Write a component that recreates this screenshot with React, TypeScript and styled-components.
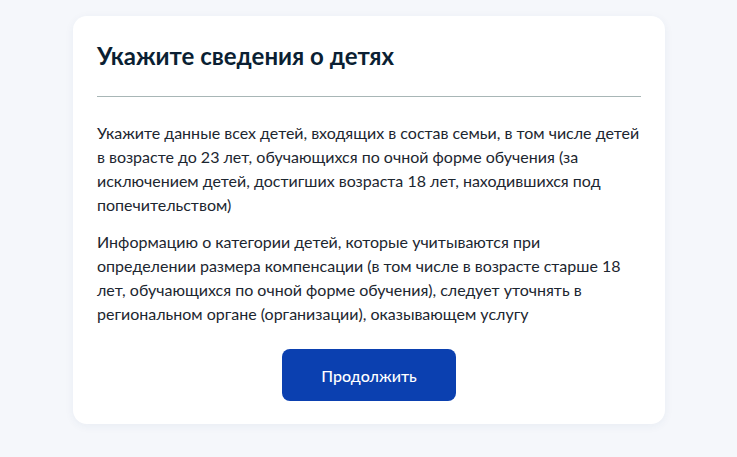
import styled, { createGlobalStyle } from "styled-components";

const Global = createGlobalStyle`
  html, body {
    margin: 0;
    padding: 0;
    background: #f5f7fb;
  }
  body {
    font-family: Lato, "Open Sans", sans-serif;
    -webkit-font-smoothing: antialiased;
  }
`

const Page = styled.div`
  min-height: 457px;
  padding: 16px 0 0 73px;
  box-sizing: border-box;
`

const Card = styled.section`
  width: 592px;
  box-sizing: border-box;
  padding: 24px 24px 23px;
  background: #fff;
  border-radius: 14px;
  box-shadow: 0 2px 10px rgba(30, 60, 120, 0.06);
`

const Title = styled.h1`
  margin: 0;
  font-size: 24px;
  line-height: 32px;
  font-weight: 700;
  color: #0b1f33;
`

const Divider = styled.hr`
  margin: 24px 0 24px;
  border: none;
  height: 1px;
  background: #a8b6b6;
`

const Text = styled.p`
  margin: 0 0 13px;
  font-size: 16px;
  line-height: 24px;
  color: #1c2630;
  &:last-of-type{
    margin-bottom: 0;
  }
`

const Actions = styled.div`
  display: flex;
  justify-content: center;
  padding-top: 23px;
`

const Button = styled.button`
  width: 174px;
  height: 52px;
  border: none;
  border-radius: 8px;
  background: #0b40b0;
  color: #fff;
  font-family: Lato, sans-serif;
  font-size: 16px;
  font-weight: 500;
  cursor: pointer;
`

function App(){
  return(
    <Page>
      <Global />
      <Card>
        <Title>Укажите сведения о детях</Title>
        <Divider />
        <Text>
          Укажите данные всех детей, входящих в состав семьи, в том числе детей
          в возрасте до 23 лет, обучающихся по очной форме обучения (за
          исключением детей, достигших возраста 18 лет, находившихся под
          попечительством)
        </Text>
        <Text>
          Информацию о категории детей, которые учитываются при
          определении размера компенсации (в том числе в возрасте старше 18
          лет, обучающихся по очной форме обучения), следует уточнять в
          региональном органе (организации), оказывающем услугу
        </Text>
        <Actions>
          <Button>Продолжить</Button>
        </Actions>
      </Card>
    </Page>
  );
}
export default App;
